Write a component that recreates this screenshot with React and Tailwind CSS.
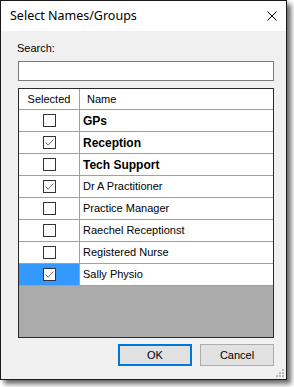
import React from "react";

const rows = [
  { name: "GPs", bold: true, checked: false },
  { name: "Reception", bold: true, checked: true },
  { name: "Tech Support", bold: true, checked: false },
  { name: "Dr A Practitioner", bold: false, checked: true },
  { name: "Practice Manager", bold: false, checked: false },
  { name: "Raechel Receptionst", bold: false, checked: false },
  { name: "Registered Nurse", bold: false, checked: false },
  { name: "Sally Physio", bold: false, checked: true, selected: true },
];

function CheckBox({ checked }) {
  return (
    <div className="w-[13px] h-[13px] border border-[#333333] bg-white flex items-center justify-center">
      {checked && (
        <svg width="11" height="11" viewBox="0 0 11 11">
          <path d="M1.5 5.5 L4.2 8.2 L9.5 2.5" fill="none" stroke="#6a6a6a" strokeWidth="1" />
        </svg>
      )}
    </div>
  );
}

export default function App() {
  return (
    <div className="w-[294px] h-[387px] bg-white relative" style={{ fontFamily: '"Liberation Sans", Arial, sans-serif' }}>
      <div className="w-[287px] h-[380px] border border-[#1a1a1a] bg-[#f0f0f0] flex flex-col shadow-[4px_4px_5px_rgba(0,0,0,0.6)]">
        {/* Title bar */}
        <div className="h-[30px] bg-white flex items-center justify-between pl-[9px] pr-[9px] shrink-0">
          <span className="text-[12.5px] text-black" style={{ fontFamily: '"Noto Sans", "Open Sans", sans-serif' }}>Select Names/Groups</span>
          <svg width="10" height="10" viewBox="0 0 10 10">
            <path d="M0.5 0.5 L9.5 9.5 M9.5 0.5 L0.5 9.5" stroke="#000" strokeWidth="1" />
          </svg>
        </div>
        {/* Body */}
        <div className="flex-1 flex flex-col pl-[17px] pr-[11px] relative">
          <div className="text-[11px] text-black mt-[11px] leading-[13px] h-[13px] -ml-[1px]">Search:</div>
          <div className="mt-[6px] h-[20px] w-[256px] border border-[#7a7a7a] bg-white"></div>
          {/* Grid */}
          <div className="mt-[7px] w-[256px] h-[250px] border border-[#2a2a2a] bg-[#ababab] flex flex-col">
            <div className="flex h-[21px] bg-white border-b border-[#a0a0a0] shrink-0">
              <div className="w-[61px] border-r border-[#a0a0a0] flex items-center justify-center text-[11px] text-black">Selected</div>
              <div className="flex-1 flex items-center pl-[7px] text-[11px] text-black">Name</div>
            </div>
            {rows.map((r) => (
              <div key={r.name} className="flex h-[22px] bg-white border-b border-[#a0a0a0] shrink-0">
                <div className={`w-[61px] border-r border-[#a0a0a0] flex items-center justify-center ${r.selected ? "bg-[#3399ff]" : "bg-white"}`}>
                  <CheckBox checked={r.checked} />
                </div>
                <div className={`flex-1 flex items-center pl-[3px] text-[11px] text-black ${r.bold ? "font-bold text-[12px]" : ""}`}>{r.name}</div>
              </div>
            ))}
          </div>
          {/* Buttons */}
          <div className="flex justify-end gap-[8px] mt-[6px] pr-[1px]">
            <button className="w-[74px] h-[22px] border-2 border-[#0078d7] bg-[#e1e1e1] text-[11px] text-black flex items-center justify-center">OK</button>
            <button className="w-[74px] h-[22px] border border-[#adadad] bg-[#e1e1e1] text-[11px] text-black flex items-center justify-center">Cancel</button>
          </div>
          {/* Grip */}
          <svg width="8" height="8" viewBox="0 0 8 8" className="absolute right-[2px] bottom-[2px]">
            <rect x="6" y="0" width="2" height="2" fill="#b8b8b8" />
            <rect x="3" y="3" width="2" height="2" fill="#b8b8b8" />
            <rect x="6" y="3" width="2" height="2" fill="#b8b8b8" />
            <rect x="0" y="6" width="2" height="2" fill="#b8b8b8" />
            <rect x="3" y="6" width="2" height="2" fill="#b8b8b8" />
            <rect x="6" y="6" width="2" height="2" fill="#b8b8b8" />
          </svg>
        </div>
      </div>
    </div>
  );
}
